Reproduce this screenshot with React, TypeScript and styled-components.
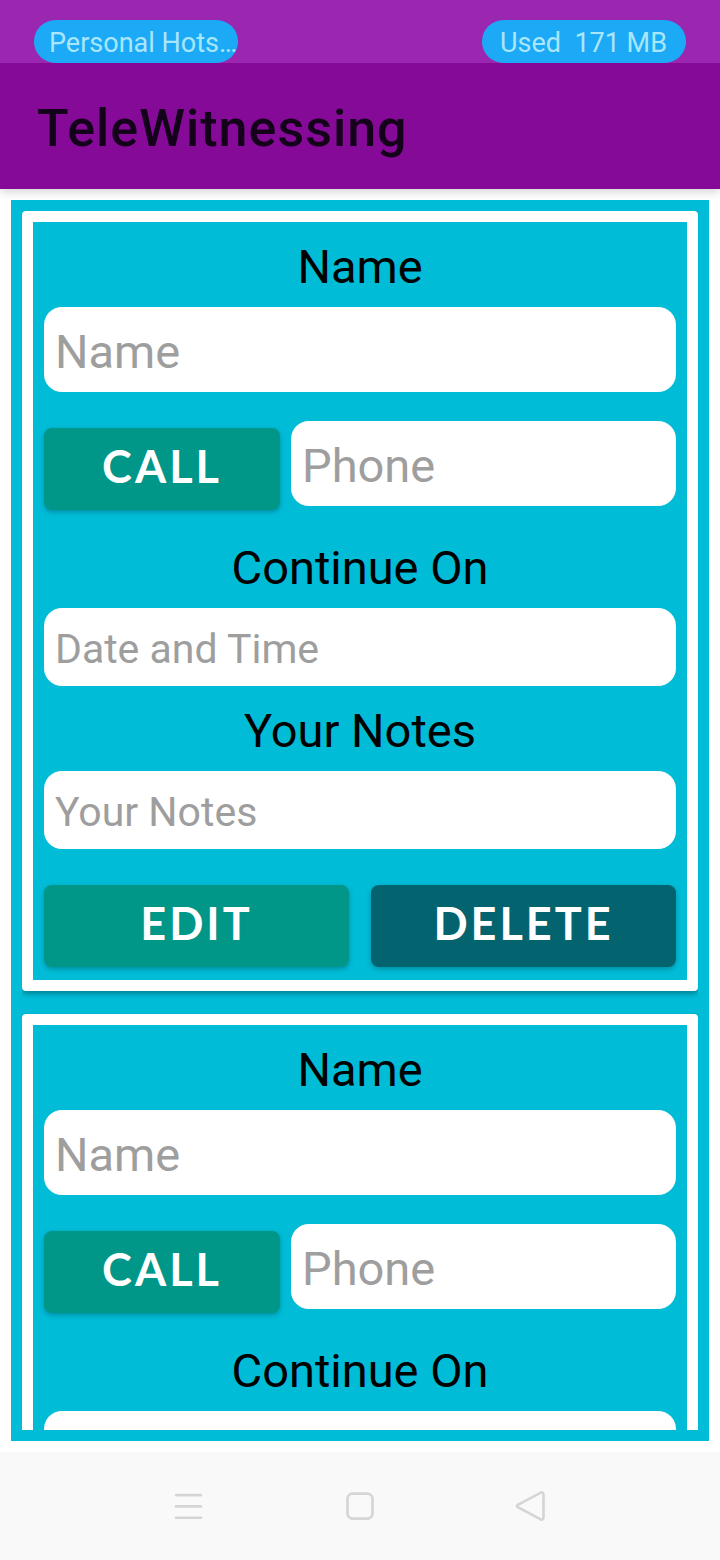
import React, { useId } from "react";
import styled, { createGlobalStyle } from "styled-components";

const GlobalStyle = createGlobalStyle`
  *, *::before, *::after { box-sizing: border-box; }
  body {
    margin: 0;
    background: #ffffff;
    font-family: Roboto, "Liberation Sans", sans-serif;
  }
  button, input { font: inherit; }
`;

const Screen = styled.div`
  display: flex;
  flex-direction: column;
  height: 100vh;
`;

const StatusBar = styled.div`
  position: relative;
  z-index: 1;
  display: flex;
  justify-content: space-between;
  padding: 20px 34px 0;
  background: #9b27b0;
`;

const StatusPill = styled.span`
  width: 204px;
  height: 43px;
  padding: 2px 0 0 15px;
  border-radius: 22px;
  background: #1caaf6;
  color: #aae6fb;
  font-size: 27px;
  line-height: 43px;
  white-space: pre;
`;

const UsagePill = styled(StatusPill)`
  padding-left: 18px;
`;

const AppBar = styled.header`
  flex: none;
  display: flex;
  align-items: center;
  height: 126px;
  padding: 4px 37px 0;
  background: #850a97;
  box-shadow: 0 2px 10px rgba(0, 0, 0, 0.2);
`;

const Title = styled.h1`
  margin: 0;
  color: #14021a;
  font-size: 52px;
  font-weight: 500;
  letter-spacing: 1px;
`;

const Content = styled.main`
  flex: 1;
  min-height: 0;
  margin: 11px;
  padding: 11px;
  background: #00bcd7;
`;

const ContactList = styled.div`
  display: flex;
  flex-direction: column;
  gap: 23px;
  height: 100%;
  overflow-y: auto;
  scrollbar-width: none;
`;

const Card = styled.form`
  flex: none;
  border: 11px solid #ffffff;
  border-radius: 4px;
  padding: 0 11px;
  background: #00bcd7;
  box-shadow: 0 3px 5px rgba(0, 0, 0, 0.3);
`;

const FieldLabel = styled.label`
  display: block;
  padding-top: 4px;
  color: #000000;
  font-size: 47px;
  line-height: 81px;
  text-align: center;
`;

const Field = styled.input<{ $compact?: boolean }>`
  display: block;
  width: 100%;
  min-width: 0;
  height: ${(p) => (p.$compact ? 78 : 85)}px;
  padding: 3px 11px 0;
  border: 0;
  border-radius: 18px;
  background: #ffffff;
  color: #000000;
  font-size: ${(p) => (p.$compact ? 41 : 47)}px;
  outline: none;
  &::placeholder { color: #9e9e9e; opacity: 1; }
`;

const CallRow = styled.div`
  display: grid;
  grid-template-columns: 236fr 385fr;
  gap: 11px;
  height: 131px;
  padding: 29px 0 13px;
`;

const ActionRow = styled.div`
  display: grid;
  grid-template-columns: 1fr 1fr;
  gap: 22px;
  padding: 36px 0 13px;
`;

const ActionButton = styled.button<{ $tone?: "danger" }>`
  align-self: end;
  height: 82px;
  padding: 0 0 6px;
  border: 0;
  border-radius: 8px;
  background: ${(p) => (p.$tone === "danger" ? "#03646f" : "#009688")};
  box-shadow: 0 2px 5px rgba(0, 0, 0, 0.25);
  color: #ffffff;
  font-family: Lato, "Liberation Sans", sans-serif;
  font-size: 45px;
  font-weight: 700;
  letter-spacing: 3px;
  text-transform: uppercase;
`;

const NavBar = styled.nav`
  flex: none;
  display: flex;
  align-items: center;
  justify-content: center;
  gap: 112px;
  height: 108px;
  background: #f9f9f9;
`;

const NavButton = styled.button`
  width: 60px;
  height: 60px;
  padding: 0;
  border: 0;
  background: none;
  color: #d5d5d5;
  svg { display: block; margin: auto; }
`;

function NavIcon({ children }: { children: React.ReactNode }) {
  return (
    <svg width="36" height="36" viewBox="0 0 36 36" fill="none" stroke="currentColor"
      strokeWidth="2.6" strokeLinecap="round" strokeLinejoin="round" aria-hidden="true">
      {children}
    </svg>
  );
}

function ContactCard() {
  const id = useId();
  return (
    <Card onSubmit={(e) => e.preventDefault()}>
      <FieldLabel htmlFor={`${id}-name`}>Name</FieldLabel>
      <Field id={`${id}-name`} placeholder="Name" />
      <CallRow>
        <ActionButton type="button">Call</ActionButton>
        <Field type="tel" placeholder="Phone" aria-label="Phone" />
      </CallRow>
      <FieldLabel htmlFor={`${id}-date`}>Continue On</FieldLabel>
      <Field $compact id={`${id}-date`} placeholder="Date and Time" />
      <FieldLabel htmlFor={`${id}-notes`}>Your Notes</FieldLabel>
      <Field $compact id={`${id}-notes`} placeholder="Your Notes" />
      <ActionRow>
        <ActionButton type="button">Edit</ActionButton>
        <ActionButton type="button" $tone="danger">Delete</ActionButton>
      </ActionRow>
    </Card>
  );
}

export default function App() {
  return (
    <Screen>
      <GlobalStyle />
      <StatusBar>
        <StatusPill>Personal Hots…</StatusPill>
        <UsagePill>{"Used  171 MB"}</UsagePill>
      </StatusBar>
      <AppBar>
        <Title>TeleWitnessing</Title>
      </AppBar>
      <Content>
        <ContactList>
          <ContactCard />
          <ContactCard />
        </ContactList>
      </Content>
      <NavBar>
        <NavButton type="button" aria-label="Recent apps">
          <NavIcon>
            <path d="M6 7.1h25M6 18.4h25M6 29.7h25" />
          </NavIcon>
        </NavButton>
        <NavButton type="button" aria-label="Home">
          <NavIcon>
            <rect x="5.5" y="5.6" width="25" height="25" rx="5" />
          </NavIcon>
        </NavButton>
        <NavButton type="button" aria-label="Back">
          <NavIcon>
            <path d="M3.8 16.9 26.3 4.8Q29.3 3.5 29.5 6.5V29.5Q29.3 32.5 26.3 31.2L3.8 19.1Q2 18 3.8 16.9Z" />
          </NavIcon>
        </NavButton>
      </NavBar>
    </Screen>
  );
}
